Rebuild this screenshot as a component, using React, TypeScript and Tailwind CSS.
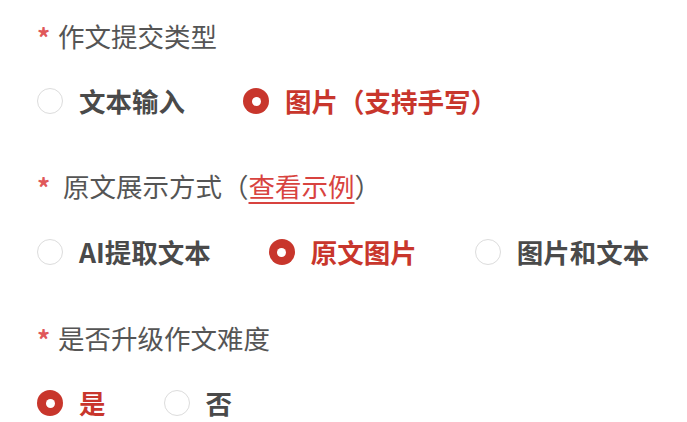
import React, { useState } from "react";

const FONT = { fontFamily: '"Noto Sans CJK SC", "Noto Sans", sans-serif' };

type Option = { value: string; label: string };

const Radio = ({ checked }: { checked: boolean }) =>
  checked ? (
    <span className="w-[26px] h-[26px] rounded-full bg-[#c8362c] flex items-center justify-center shrink-0">
      <span className="w-[9px] h-[9px] rounded-full bg-white" />
    </span>
  ) : (
    <span className="w-[26px] h-[26px] rounded-full border-[1.5px] border-[#dcdcdc] bg-white shrink-0" />
  );

const RadioGroup = ({
  options,
  value,
  onChange,
}: {
  options: Option[];
  value: string;
  onChange: (v: string) => void;
}) => (
  <div className="flex items-center gap-[58px] h-[32px]">
    {options.map((o) => {
      const checked = o.value === value;
      return (
        <button
          key={o.value}
          onClick={() => onChange(o.value)}
          className="flex items-center gap-[16px] focus:outline-none"
        >
          <Radio checked={checked} />
          <span
            className={`text-[26.5px] leading-none font-bold ${checked ? "text-[#c8362c]" : "text-[#4a4a4a]"}`}
          >
            {o.label}
          </span>
        </button>
      );
    })}
  </div>
);

const Label = ({ children, spaced }: { children: React.ReactNode; spaced?: boolean }) => (
  <div className="flex items-center h-[36px]">
    <span
      className={`text-[26px] leading-none font-bold text-[#e0585a] self-start mt-[6px] ${spaced ? "w-[26px]" : "w-[21px]"}`}
    >
      *
    </span>
    <span className="text-[26.5px] leading-none text-[#555555]">{children}</span>
  </div>
);

export default function App() {
  // 表单状态
  const [submitType, setSubmitType] = useState("image");
  const [display, setDisplay] = useState("original");
  const [upgrade, setUpgrade] = useState("yes");

  return (
    <div className="w-[687px] min-h-[422px] bg-white pl-[37px] pt-[18px]" style={FONT}>
      <Label>作文提交类型</Label>
      <div className="mt-[31px]">
        <RadioGroup
          value={submitType}
          onChange={setSubmitType}
          options={[
            { value: "text", label: "文本输入" },
            { value: "image", label: "图片（支持手写）" },
          ]}
        />
      </div>

      <div className="mt-[51px]">
        <Label spaced>
          原文展示方式（
          <a href="#example" className="text-[#d8433f] underline underline-offset-[5px] decoration-[1.5px]">
            查看示例
          </a>
          ）
        </Label>
      </div>
      <div className="mt-[32px]">
        <RadioGroup
          value={display}
          onChange={setDisplay}
          options={[
            { value: "ai", label: "AI提取文本" },
            { value: "original", label: "原文图片" },
            { value: "both", label: "图片和文本" },
          ]}
        />
      </div>

      <div className="mt-[52px]">
        <Label>是否升级作文难度</Label>
      </div>
      <div className="mt-[31px]">
        <RadioGroup
          value={upgrade}
          onChange={setUpgrade}
          options={[
            { value: "yes", label: "是" },
            { value: "no", label: "否" },
          ]}
        />
      </div>
    </div>
  );
}
